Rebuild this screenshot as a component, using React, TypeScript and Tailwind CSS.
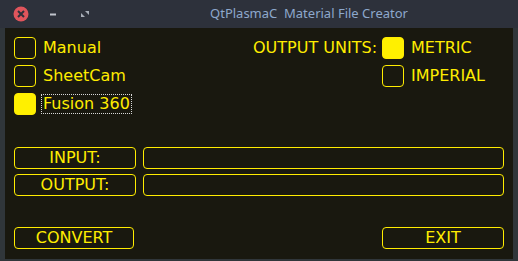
import React from "react";

function Check({ label, checked, focus }: { label: string; checked?: boolean; focus?: boolean }) {
  return (
    <div className="flex items-center h-[22px]">
      <div
        className={
          "w-[22px] h-[22px] rounded-[4px] border border-[#ffec00] " +
          (checked ? "bg-[#fff000]" : "bg-transparent")
        }
      />
      {focus ? (
        <span className="ml-[5px] h-[20px] leading-[18px] px-[1px] border border-dotted border-[#d8d8d8] text-[#ffec00]">
          {label}
        </span>
      ) : (
        <span className="ml-[7px] leading-[22px] text-[#ffec00]">{label}</span>
      )}
    </div>
  );
}

function Btn({ label, w }: { label: string; w: string }) {
  return (
    <div
      className={
        w +
        " h-[22px] rounded-[4px] border border-[#ffec00] flex items-center justify-center text-[#ffec00] leading-none"
      }
    >
      {label}
    </div>
  );
}

export default function App() {
  return (
    <div className="w-[518px] h-[261px] flex flex-col bg-[#30363a] overflow-hidden">
      {/* title bar */}
      <div className="h-[28px] bg-[#2d313b] flex items-center relative shrink-0">
        <svg width="110" height="28" className="absolute left-0 top-0">
          <circle cx="21" cy="14" r="7.5" fill="#e0555c" />
          <path d="M18 11 L24 17 M24 11 L18 17" stroke="#2d313b" strokeWidth="2" />
          <path d="M50 14.5 H56" stroke="#c0c4cc" strokeWidth="2" />
          <path d="M85 11 H89 V15 Z" fill="#a8aeb8" />
          <path d="M81 13 V17 H85 Z" fill="#a8aeb8" />
        </svg>
        <div
          className="w-full text-center whitespace-pre text-[13px] text-[#8da8cc] pl-[100px]"
          style={{ fontFamily: '"Noto Sans", sans-serif' }}
        >
          {"QtPlasmaC  Material File Creator"}
        </div>
      </div>
      {/* body */}
      <div
        className="flex-1 mx-[5px] mb-[2px] bg-[#19180f] pt-[9px] px-[9px] flex flex-col text-[16px]"
        style={{ fontFamily: '"DejaVu Sans", sans-serif' }}
      >
        <div className="flex">
          <div className="w-[239px] flex flex-col gap-[6px]">
            <Check label="Manual" />
            <Check label="SheetCam" />
            <Check label="Fusion 360" checked focus />
          </div>
          <div className="flex">
            <span className="leading-[22px] text-[#ffec00] w-[129px]">OUTPUT UNITS:</span>
            <div className="flex flex-col gap-[6px]">
              <Check label="METRIC" checked />
              <Check label="IMPERIAL" />
            </div>
          </div>
        </div>
        <div className="mt-[32px] flex flex-col gap-[5px]">
          <div className="flex gap-[7px]">
            <Btn label="INPUT:" w="w-[122px]" />
            <div className="flex-1 h-[22px] rounded-[4px] border border-[#ffec00]" />
          </div>
          <div className="flex gap-[7px]">
            <Btn label="OUTPUT:" w="w-[122px]" />
            <div className="flex-1 h-[22px] rounded-[4px] border border-[#ffec00]" />
          </div>
        </div>
        <div className="mt-[31px] flex justify-between">
          <Btn label="CONVERT" w="w-[120px]" />
          <Btn label="EXIT" w="w-[122px]" />
        </div>
      </div>
    </div>
  );
}
